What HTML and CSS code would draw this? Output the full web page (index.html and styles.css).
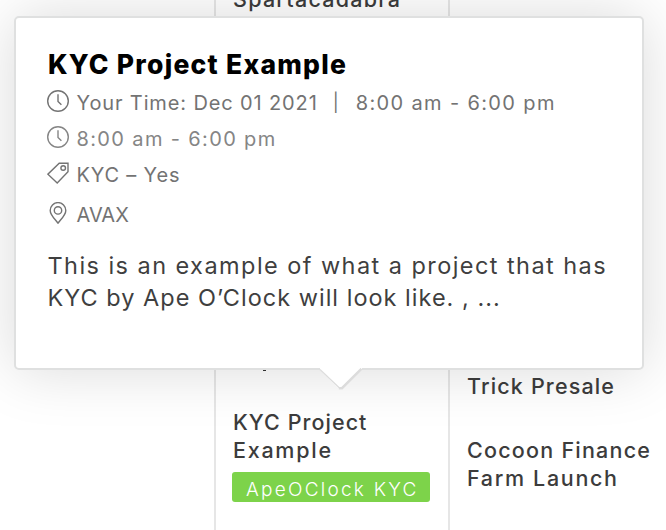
FILE: index.html
```
<!DOCTYPE html>
<html lang="en">
<head>
<meta charset="utf-8">
<title>Event calendar</title>
<link rel="stylesheet" href="styles.css">
</head>
<body>
<main class="calendar">
  <div class="day"></div>
  <div class="day">
    <div class="event event-first"><span class="w-spart">Spartacadabra</span></div>
    <div class="tail"></div>
    <div class="event event-kyc">
      <span class="w-project">KYC Project</span>
      <span class="w-example">Example</span>
      <span class="badge">ApeOClock KYC</span>
    </div>
  </div>
  <div class="day">
    <div class="event event-trick"><span class="w-trick">Trick Presale</span></div>
    <div class="event event-cocoon">
      <span class="w-cocoon">Cocoon Finance</span>
      <span class="w-farm">Farm Launch</span>
    </div>
  </div>
</main>

<section class="tooltip">
  <h3 class="title">KYC Project Example</h3>
  <div class="meta">
    <svg class="icon" viewBox="0 0 22 22"><circle cx="11" cy="11" r="10.3"/><path d="M11 4.2v7.2l3.4 3.4"/></svg>
    <span class="w-date">Your Time: Dec 01 2021</span><span class="bar">|</span><span class="w-hours">8:00 am - 6:00 pm</span>
  </div>
  <div class="meta meta-light">
    <svg class="icon" viewBox="0 0 22 22"><circle cx="11" cy="11" r="10.3"/><path d="M11 4.2v7.2l3.4 3.4"/></svg>
    <span class="w-hours">8:00 am - 6:00 pm</span>
  </div>
  <div class="meta">
    <svg class="icon" viewBox="0 0 22 22"><path d="M12.2 1.2H21v8.6L10.2 21 .9 12.2z"/><circle cx="16.2" cy="6" r="2.3"/></svg>
    <span class="w-tag">KYC – Yes</span>
  </div>
  <div class="meta meta-place">
    <svg class="icon" viewBox="0 0 22 22"><path d="M11 21.2C9 18 3.2 13.3 3.2 8.4a7.8 7.8 0 0 1 15.6 0c0 4.9-5.8 9.6-7.8 12.8z"/><circle cx="11" cy="8.4" r="3.7"/></svg>
    <span>AVAX</span>
  </div>
  <p class="text"><span class="w-line1">This is an example of what a project that has</span> <span class="w-line2">KYC by Ape O’Clock will look like. , ...</span></p>
  <svg class="arrow" viewBox="0 0 44 23"><path class="arrow-fill" d="M1 0h42v2L23.5 21.5h-3L1 2z"/><path class="arrow-thin" d="M1 1.5L20.5 20"/><path class="arrow-edge" d="M42.5 .8L23 20.2h-3.2"/></svg>
</section>
</body>
</html>
```
FILE: styles.css
```
* { box-sizing: border-box; }
body {
  margin: 0;
  width: 666px;
  height: 530px;
  position: relative;
  overflow: hidden;
  background: #fff;
  font-family: Inter, "Liberation Sans", sans-serif;
}
.calendar {
  display: grid;
  grid-template-columns: 214px 234px 218px;
  height: 530px;
}
.day + .day {
  border-left: 2px solid #e6e6e6;
  padding-left: 17px;
}
.event {
  display: flex;
  flex-direction: column;
  align-items: flex-start;
  font-size: 21.5px;
  font-weight: 500;
  line-height: 28px;
  color: #3c3c3c;
  white-space: nowrap;
}
.event-first { margin-top: -15px; }
.tail {
  width: 3px;
  height: 1px;
  margin: 357px 0 0 30px;
  background: #333;
}
.event-kyc { margin-top: 37px; }
.event-trick { margin-top: 372px; }
.event-cocoon { margin-top: 36px; }
.badge {
  width: 198px;
  height: 30px;
  margin: 8px 0 0 -1px;
  padding-left: 14px;
  border-radius: 3px;
  background: #7dd34a;
  color: #fff;
  font-size: 19px;
  font-weight: 300;
  line-height: 35px;
  letter-spacing: 2.25px;
}
.tooltip {
  position: absolute;
  left: 14px;
  top: 16px;
  width: 630px;
  height: 354px;
  padding: 30px 32px;
  border: 2px solid #dfe0e0;
  border-radius: 5px;
  background: #fff;
  box-shadow: 0 0 60px rgba(0, 0, 0, .15);
  white-space: nowrap;
}
.title {
  margin: 0 0 5px;
  font-size: 26.5px;
  font-weight: 800;
  line-height: 32px;
  letter-spacing: 1.26px;
  color: #000;
}
.meta {
  display: flex;
  font-size: 20px;
  line-height: 36px;
  color: #737373;
}
.meta-light { color: #858585; }
.meta-place { margin-top: 4px; }
.icon {
  width: 22px;
  height: 22px;
  margin: 5px 7.5px 0 -1px;
  fill: none;
  stroke: currentColor;
  stroke-width: 1.4;
}
.bar { width: 38px; padding-left: 15px; font-size: 18px; font-weight: 400; }
.text {
  margin: 17px 0 0 -.5px;
  font-size: 23.5px;
  line-height: 32px;
  color: #3f3f3f;
}
.text span { display: block; }
.arrow {
  position: absolute;
  left: 303px;
  top: 350px;
  width: 44px;
  height: 23px;
  fill: none;
}
.arrow-fill { fill: #fff; }
.arrow-thin { stroke: #dcdcdc; stroke-width: 1.2; }
.arrow-edge { stroke: #dcdcdc; stroke-width: 2.6; }
.w-date { letter-spacing: .87px; }
.w-hours { letter-spacing: 1.36px; }
.w-tag { letter-spacing: .82px; }
.w-line1 { letter-spacing: 1.44px; }
.w-line2 { letter-spacing: 1.01px; }
.w-spart { letter-spacing: 1.25px; }
.w-project { letter-spacing: 1.05px; }
.w-example { letter-spacing: 1.74px; }
.w-trick { letter-spacing: 1.15px; }
.w-cocoon { letter-spacing: 1.23px; }
.w-farm { letter-spacing: 1.66px; }
```
